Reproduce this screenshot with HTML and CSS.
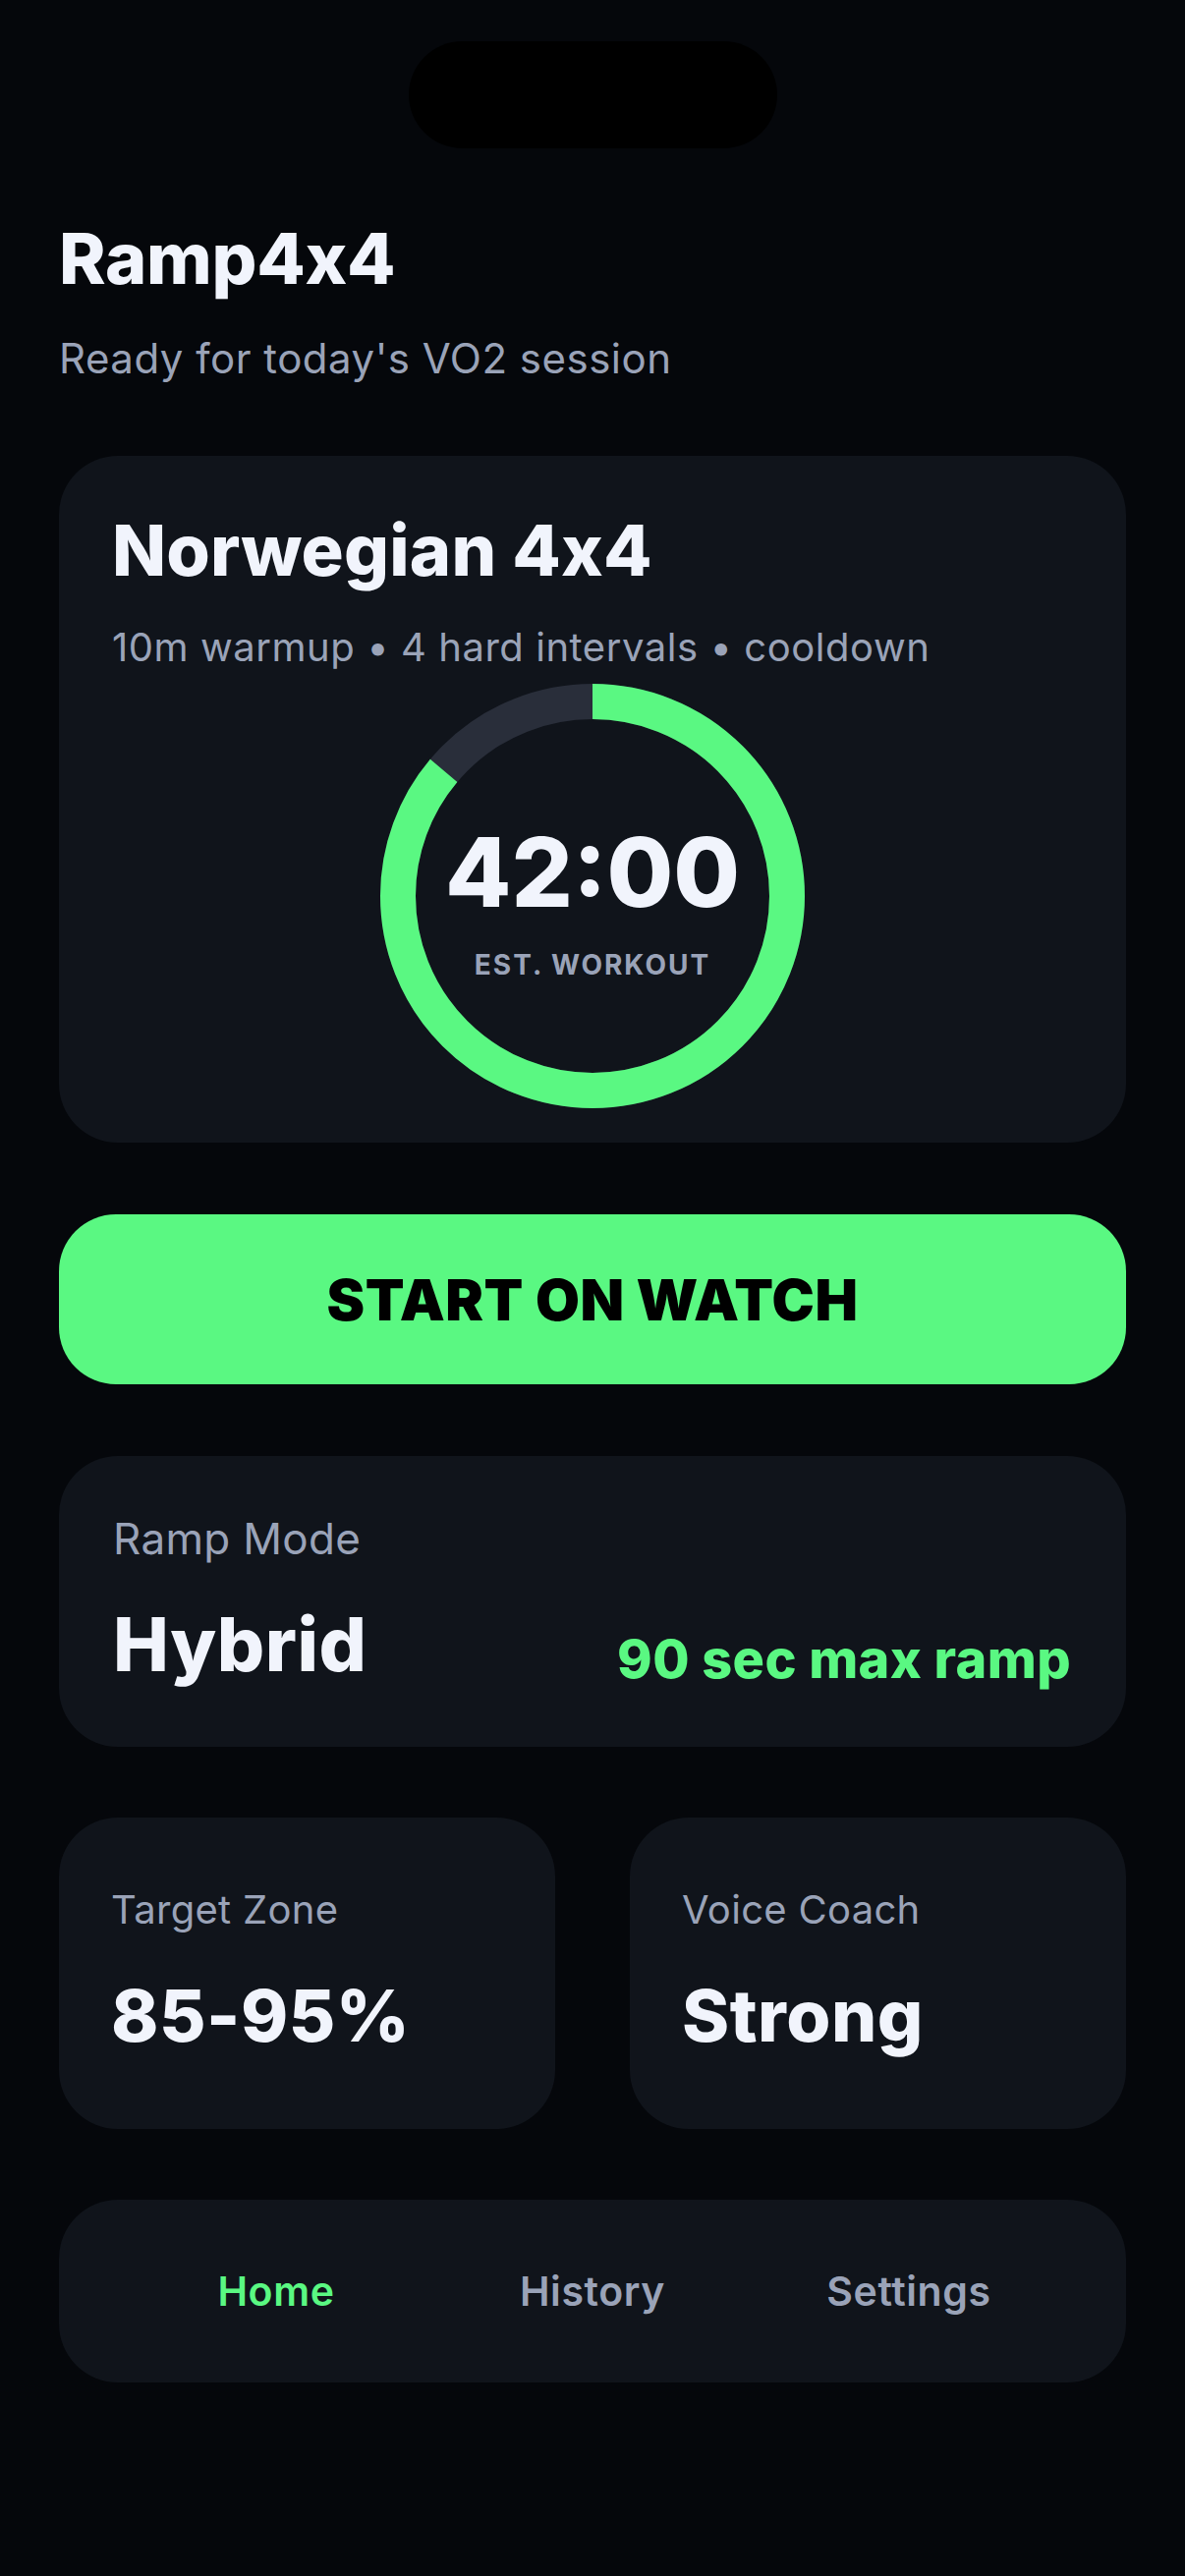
FILE: index.html
```html
<!DOCTYPE html>
<html>
<head>
	<title>Ramp4x4</title>
	<link rel="stylesheet" href="styles.css">
</head>
<body>
	<div class="screen">
		<div class="notch"></div>

		<div class="header">
			<h1 class="app-title">Ramp4x4</h1>
			<p class="app-sub">Ready for today's VO2 session</p>
		</div>

		<div class="card workout">
			<h2 class="workout-title">Norwegian 4x4</h2>
			<p class="workout-meta">10m warmup • 4 hard intervals • cooldown</p>
			<div class="ring">
				<svg width="432" height="432" viewBox="0 0 432 432">
					<circle cx="216" cy="216" r="198" fill="none" stroke="#292e3a" stroke-width="36"/>
					<circle cx="216" cy="216" r="198" fill="none" stroke="#5af882" stroke-width="36"
						stroke-dasharray="1071.3 1244.1" transform="rotate(-90 216 216)"/>
				</svg>
				<div class="ring-text">
					<div class="ring-time">42:00</div>
					<div class="ring-label">EST. WORKOUT</div>
				</div>
			</div>
		</div>

		<div class="start-btn">START ON WATCH</div>

		<div class="card ramp">
			<div class="label big">Ramp Mode</div>
			<div class="ramp-row">
				<div class="value hybrid">Hybrid</div>
				<div class="ramp-note">90 sec max ramp</div>
			</div>
		</div>

		<div class="pair">
			<div class="card small">
				<div class="label">Target Zone</div>
				<div class="value">85-95%</div>
			</div>
			<div class="card small">
				<div class="label">Voice Coach</div>
				<div class="value">Strong</div>
			</div>
		</div>

		<div class="card nav">
			<div class="nav-item active">Home</div>
			<div class="nav-item">History</div>
			<div class="nav-item">Settings</div>
		</div>
	</div>
</body>
</html>
```

FILE: styles.css
```css
*{
	margin: 0;
	padding: 0;
	box-sizing: border-box;
}
body{
	background: #05070b;
	font-family: Inter, "Noto Sans", sans-serif;
	color: #f1f4fc;
}
.screen{
	width: 1206px;
	min-height: 2622px;
	padding: 0 60px;
}
.notch{
	width: 375px;
	height: 109px;
	margin: 42px auto 0;
	border-radius: 55px;
	background: #000;
}
.header{
	margin-top: 69px;
}
.app-title{
	font-size: 72px;
	font-weight: 800;
	line-height: 1.2;
	letter-spacing: -0.3px;
}
.app-sub{
	margin-top: 34px;
	font-size: 42px;
	line-height: 1.2;
	letter-spacing: 0.5px;
	color: #9aa3b8;
}
.card{
	background: #10141b;
	border-radius: 60px;
}
.workout{
	margin-top: 73px;
	padding: 53px 54px 35px;
}
.workout-title{
	font-size: 72px;
	font-weight: 800;
	line-height: 1.2;
	letter-spacing: 0.2px;
}
.workout-meta{
	margin-top: 32px;
	font-size: 40px;
	line-height: 1.2;
	letter-spacing: 0.55px;
	color: #9aa3b8;
}
.ring{
	position: relative;
	width: 432px;
	height: 432px;
	margin: 13px auto 0;
}
.ring svg{
	display: block;
}
.ring-text{
	position: absolute;
	inset: 0;
	display: flex;
	flex-direction: column;
	align-items: center;
	justify-content: center;
	padding-top: 10px;
}
.ring-time{
	font-size: 98px;
	font-weight: 800;
	line-height: 1;
}
.ring-label{
	margin-top: 31px;
	font-size: 28px;
	font-weight: 700;
	line-height: 1;
	letter-spacing: 2px;
	color: #9aa3b8;
}
.start-btn{
	margin-top: 73px;
	height: 173px;
	border-radius: 58px;
	background: #5af882;
	color: #000;
	display: flex;
	align-items: center;
	justify-content: center;
	font-size: 58px;
	font-weight: 900;
	letter-spacing: 0.5px;
}
.ramp{
	margin-top: 73px;
	padding: 58px 56px 59px 55px;
}
.label{
	font-size: 40px;
	line-height: 1.2;
	letter-spacing: 0.3px;
	color: #9aa3b8;
}
.label.big{
	font-size: 44px;
}
.value{
	margin-top: 40px;
	font-size: 73px;
	font-weight: 800;
	line-height: 1.2;
	letter-spacing: 0.5px;
}
.value.hybrid{
	margin-top: 35px;
	font-size: 76px;
}
.ramp-row{
	display: flex;
	justify-content: space-between;
	align-items: flex-end;
}
.ramp-note{
	font-size: 54px;
	font-weight: 800;
	line-height: 1.2;
	letter-spacing: 0.4px;
	color: #5af882;
	margin-bottom: -3px;
}
.pair{
	margin-top: 72px;
	display: flex;
	gap: 76px;
}
.small{
	flex: 1;
	padding: 70px 53px 71px;
}
.nav{
	margin-top: 72px;
	height: 186px;
	padding: 0 60px;
	display: flex;
	align-items: center;
}
.nav-item{
	flex: 1;
	text-align: center;
	font-size: 41px;
	font-weight: 600;
	letter-spacing: 0.6px;
	color: #9aa3b8;
}
.nav-item.active{
	color: #5af882;
}
```
